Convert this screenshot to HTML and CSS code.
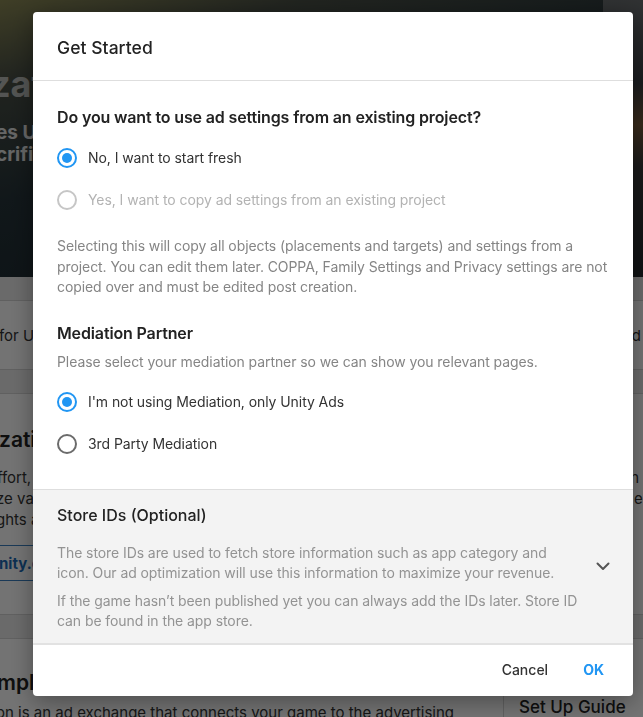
FILE: index.html
```html
<!DOCTYPE html>
<html lang="en">
<head>
<meta charset="utf-8">
<title>Get Started</title>
<link rel="stylesheet" href="styles.css">
</head>
<body>
<div class="page">
  <header class="hero">
    <div class="hero-text">
      <h1 class="hero-title">zation</h1>
      <p class="hero-sub">es Unity Ads</p>
      <p class="hero-sub">crifice</p>
    </div>
    <div class="hero-art"><span class="hero-art-text">n</span></div>
  </header>
  <div class="band"></div>
  <div class="row-strip">
    <span class="strip-left">for Unity Ads</span>
    <span class="strip-right">d</span>
  </div>
  <div class="band band-small"></div>
  <section class="card">
    <h2 class="card-title">zation</h2>
    <div class="card-line"><span>ffort, you</span><span class="line-right">n i</span></div>
    <div class="card-line"><span>ze variety</span><span class="line-right">e,</span></div>
    <div class="card-line"><span>ghts and</span><span class="line-right"></span></div>
    <div class="card-link"><span class="link-text">nity.com</span></div>
  </section>
  <div class="band band-small"></div>
  <section class="lower">
    <div class="lower-main">
      <h2 class="lower-title">mplement</h2>
      <p class="lower-text">on is an ad exchange that connects your game to the advertising</p>
    </div>
    <aside class="lower-side">
      <h3 class="side-title">Set Up Guide</h3>
    </aside>
  </section>
</div>

<div class="overlay"></div>

<div class="modal" role="dialog" aria-labelledby="modal-title">
  <div class="modal-header">
    <h2 id="modal-title" class="modal-title">Get Started</h2>
  </div>
  <div class="modal-body">
    <h3 class="section-title">Do you want to use ad settings from an existing project?</h3>
    <div class="radio-group">
      <label class="radio-row">
        <span class="radio radio-checked"></span>
        <span class="radio-label">No, I want to start fresh</span>
      </label>
      <label class="radio-row">
        <span class="radio radio-disabled"></span>
        <span class="radio-label label-disabled">Yes, I want to copy ad settings from an existing project</span>
      </label>
    </div>
    <p class="help-text">Selecting this will copy all objects (placements and targets) and settings from a project. You can edit them later. COPPA, Family Settings and Privacy settings are not copied over and must be edited post creation.</p>

    <h3 class="section-title section-gap">Mediation Partner</h3>
    <p class="sub-text">Please select your mediation partner so we can show you relevant pages.</p>
    <div class="radio-group radio-group-tight">
      <label class="radio-row">
        <span class="radio radio-checked"></span>
        <span class="radio-label">I'm not using Mediation, only Unity Ads</span>
      </label>
      <label class="radio-row">
        <span class="radio"></span>
        <span class="radio-label">3rd Party Mediation</span>
      </label>
    </div>
  </div>
  <div class="store">
    <h3 class="store-title">Store IDs (Optional)</h3>
    <div class="store-grid">
      <p class="store-text">The store IDs are used to fetch store information such as app category and icon. Our ad optimization will use this information to maximize your revenue.</p>
      <span class="chevron">
        <svg width="14" height="9" viewBox="0 0 14 9"><path d="M1.5 1.5 L7 7 L12.5 1.5" fill="none" stroke="#555" stroke-width="2" stroke-linecap="round" stroke-linejoin="round"/></svg>
      </span>
      <p class="store-text store-text-2">If the game hasn’t been published yet you can always add the IDs later. Store ID can be found in the app store.</p>
    </div>
  </div>
  <div class="modal-footer">
    <button class="btn btn-cancel">Cancel</button>
    <button class="btn btn-ok">OK</button>
  </div>
</div>
</body>
</html>
```
FILE: styles.css
```css
* {
  box-sizing: border-box;
  margin: 0;
  padding: 0;
}

html, body {
  width: 643px;
  height: 717px;
  overflow: hidden;
}

body {
  font-family: Inter, "Noto Sans", sans-serif;
  background: #eeeeee;
  color: #222;
}

/* ---------- background page ---------- */
.page {
  width: 643px;
}

.hero {
  height: 277px;
  display: flex;
  justify-content: space-between;
  overflow: hidden;
  background: linear-gradient(165deg, #8c8a55 0%, #4a5046 18%, #26343a 45%, #1d2a31 75%, #1a252b 100%);
}

.hero-text {
  padding-top: 62px;
  margin-left: -10px;
  color: #ffffff;
}

.hero-title {
  font-size: 36px;
  font-weight: 700;
  line-height: 44px;
  opacity: 0.62;
}

.hero-sub {
  font-size: 19px;
  font-weight: 700;
  line-height: 22px;
  opacity: 0.85;
  margin-left: 6px;
}

.hero-sub:first-of-type {
  margin-top: 16px;
}

.hero-art {
  width: 40px;
  height: 277px;
  background: linear-gradient(180deg, #6a6e70 0%, #3a3f44 30%, #7a5a3a 45%, #3a3a3a 60%, #22282c 100%);
  padding-top: 112px;
  padding-left: 2px;
  color: #fff;
  font-size: 19px;
  font-weight: 700;
}

.band {
  height: 23px;
  background: #ececec;
}

.band-small {
  height: 23px;
}

.row-strip {
  height: 70px;
  background: #fff;
  border-top: 1px solid #d6d6d6;
  border-bottom: 1px solid #d6d6d6;
  display: flex;
  align-items: center;
  justify-content: space-between;
  font-size: 15px;
  color: #333;
  overflow: hidden;
}

.strip-left {
  margin-left: -1px;
}

.strip-right {
  margin-right: 2px;
}

.card {
  height: 222px;
  background: #fff;
  border-top: 1px solid #d6d6d6;
  border-bottom: 1px solid #d6d6d6;
  padding-top: 32px;
  overflow: hidden;
}

.card-title {
  font-size: 21px;
  font-weight: 600;
  line-height: 28px;
  color: #222;
  margin-left: -1px;
  margin-bottom: 13px;
}

.card-line {
  display: flex;
  justify-content: space-between;
  font-size: 15px;
  line-height: 21px;
  color: #333;
  margin-left: -3px;
  margin-right: -4px;
  white-space: nowrap;
}

.card-line + .card-line {
  margin-left: -4px;
}

.card-link {
  margin-top: 15px;
  height: 36px;
  border-top: 1px solid #3a7fc0;
  border-bottom: 1px solid #3a7fc0;
  display: flex;
  align-items: center;
  font-size: 15px;
  font-weight: 700;
  color: #1c6bb6;
  margin-left: -1px;
  width: 120px;
}

.lower {
  display: flex;
  background: #fff;
  border-top: 1px solid #d6d6d6;
  height: 90px;
}

.lower-main {
  width: 503px;
  padding-top: 30px;
  overflow: hidden;
}

.lower-title {
  font-size: 21px;
  font-weight: 600;
  line-height: 28px;
  margin-left: -3px;
}

.lower-text {
  font-size: 15px;
  line-height: 21px;
  margin-top: 5px;
  margin-left: -4px;
  color: #333;
  white-space: nowrap;
}

.lower-side {
  flex: 1;
  border-left: 1px solid #d6d6d6;
  padding: 56px 0 0 15px;
}

.side-title {
  font-size: 17px;
  font-weight: 500;
  line-height: 24px;
  color: #222;
}

.overlay {
  position: fixed;
  inset: 0;
  background: rgba(0, 0, 0, 0.55);
}

/* ---------- modal ---------- */
.modal {
  position: fixed;
  left: 33px;
  top: 12px;
  width: 600px;
  height: 684px;
  background: #fff;
  border-radius: 4px;
  box-shadow: 0 6px 24px rgba(0, 0, 0, 0.35);
  display: flex;
  flex-direction: column;
  overflow: hidden;
}

.modal-header {
  height: 69px;
  padding: 25px 24px 0;
  border-bottom: 1px solid #dedede;
}

.modal-title {
  font-size: 17.5px;
  font-weight: 500;
  line-height: 22px;
  color: #222;
  letter-spacing: 0.05px;
}

.modal-body {
  padding: 24px 24px 24px;
}

.section-title {
  font-size: 16px;
  font-weight: 600;
  line-height: 24px;
  color: #222;
  letter-spacing: -0.14px;
}

.section-gap {
  margin-top: 23px;
}

.radio-group {
  margin-top: 8px;
  display: flex;
  flex-direction: column;
}

.radio-group-tight {
  margin-top: 9px;
}

.radio-row {
  height: 42px;
  display: flex;
  align-items: center;
  gap: 11px;
}

.radio {
  width: 20px;
  height: 20px;
  border-radius: 50%;
  border: 2px solid #6b6b6b;
  flex: none;
  display: flex;
  align-items: center;
  justify-content: center;
}

.radio-checked {
  border-color: #2196f3;
}

.radio-checked::after {
  content: "";
  width: 10px;
  height: 10px;
  border-radius: 50%;
  background: #2196f3;
}

.radio-disabled {
  border-color: #c6c6c6;
}

.radio-label {
  font-size: 14px;
  line-height: 20px;
  color: #333;
  letter-spacing: -0.07px;
}

.label-disabled {
  color: #b3b3b3;
}

.help-text {
  margin-top: 15px;
  font-size: 14px;
  line-height: 20.5px;
  color: #858585;
  letter-spacing: -0.08px;
}

.sub-text {
  margin-top: 7px;
  font-size: 14px;
  line-height: 20px;
  color: #858585;
  letter-spacing: -0.08px;
}

.store {
  background: #f3f3f3;
  border-top: 1px solid #dedede;
  border-bottom: 2px solid #e2e2e2;
  padding: 13px 24px 12px;
}

.store-title {
  font-size: 16px;
  font-weight: 500;
  line-height: 24px;
  color: #222;
}

.store-grid {
  margin-top: 16px;
  display: grid;
  grid-template-columns: 524px 1fr;
  row-gap: 8px;
}

.store-text {
  font-size: 14px;
  line-height: 20px;
  color: #939393;
  letter-spacing: -0.08px;
}

.store-text-2 {
  grid-column: 1;
}

.chevron {
  grid-column: 2;
  grid-row: 1;
  align-self: center;
  justify-self: end;
  margin-right: -1px;
  margin-top: 8px;
  display: flex;
}

.modal-footer {
  flex: 1;
  display: flex;
  justify-content: flex-end;
  align-items: center;
  gap: 19px;
  padding: 0 21px 0 0;
}

.btn {
  border: none;
  background: none;
  font-family: Inter, "Noto Sans", sans-serif;
  font-size: 14px;
  line-height: 20px;
  padding: 6px 8px;
  cursor: pointer;
}

.btn-cancel {
  color: #333;
  font-weight: 500;
}

.btn-ok {
  color: #2196f3;
  font-weight: 700;
}
```
